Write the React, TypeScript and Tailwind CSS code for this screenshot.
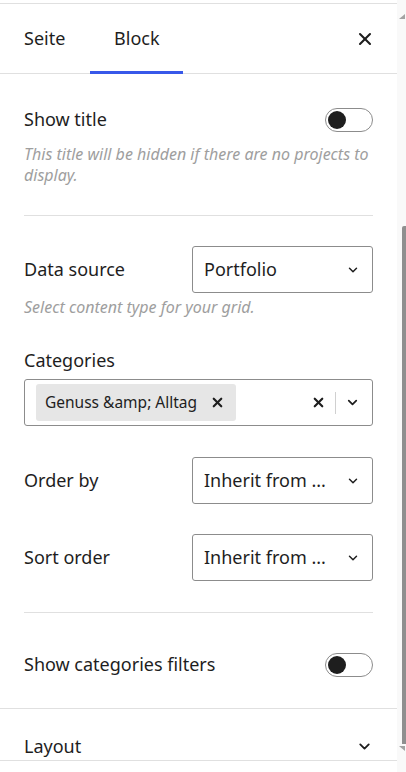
import { ChevronDown, X } from "lucide-react";

function Toggle() {
  return (
    <span className="flex h-6 w-12 shrink-0 items-center rounded-full border border-[#8c8c8c] bg-white px-[2px]">
      <span className="h-[18px] w-[18px] rounded-full bg-[#1e1e1e]" />
    </span>
  );
}

function Select({ value }: { value: string }) {
  return (
    <div className="flex h-[47px] w-[181px] items-center justify-between rounded-[3px] border border-[#8c8c8c] pl-[11px] pr-[12px]">
      <span className="text-[18px] text-[#1e1e1e]">{value}</span>
      <ChevronDown size={14} strokeWidth={2.5} className="text-[#1e1e1e]" />
    </div>
  );
}

function Row({ label, value }: { label: string; value: string }) {
  return (
    <div className="flex items-center justify-between">
      <span className="text-[18px] text-[#1e1e1e]">{label}</span>
      <Select value={value} />
    </div>
  );
}

export default function App() {
  return (
    <div
      className="flex h-[772px] w-[406px] overflow-hidden bg-white"
      style={{ fontFamily: '"Noto Sans", "Open Sans", sans-serif' }}
    >
      <div className="flex w-[397px] flex-col">
        <div className="mt-[3px] border-t border-[#e0e0e0]" />

        {/* tabs */}
        <div className="flex h-[70px] items-stretch border-b border-[#e0e0e0]">
          <div className="flex items-center pl-6 pr-[25px] text-[18px] text-[#1e1e1e]">Seite</div>
          <div className="relative flex w-[93px] items-center justify-center text-[18px] text-[#1e1e1e]">
            Block
            <span className="absolute bottom-[-1px] left-0 right-0 h-[3px] bg-[#3858e9]" />
          </div>
          <div className="flex-1" />
          <div className="flex w-[64px] items-center justify-center">
            <X size={20} strokeWidth={2.5} className="text-[#1e1e1e]" />
          </div>
        </div>

        <div className="px-6">
          {/* show title */}
          <div className="mt-[32px] flex items-center justify-between">
            <span className="text-[18px] text-[#1e1e1e]">Show title</span>
            <Toggle />
          </div>
          <p className="mt-[11px] text-[16px] italic leading-[21px] text-[#9e9e9e]">
            This title will be hidden if there are no projects to display.
          </p>
          <div className="mt-[29px] border-t border-[#e0e0e0]" />

          {/* data source */}
          <div className="mt-[30px]">
            <Row label="Data source" value="Portfolio" />
          </div>
          <p className="mt-[4px] text-[16px] italic leading-[21px] text-[#9e9e9e]">
            Select content type for your grid.
          </p>

          {/* categories */}
          <div className="mt-[30px] text-[18px] leading-[24px] text-[#1e1e1e]">Categories</div>
          <div className="mt-[7px] flex h-[47px] items-center rounded-[3px] border border-[#8c8c8c] pl-[11px] pr-[12px]">
            <div className="flex h-[37px] w-[200px] items-center justify-between rounded-[3px] bg-[#e6e6e6] pl-[9px] pr-[11px]">
              <span className="text-[15.5px] text-[#1e1e1e]">Genuss &amp;amp; Alltag</span>
              <X size={15} strokeWidth={3.5} className="text-[#1e1e1e]" />
            </div>
            <div className="flex-1" />
            <X size={15} strokeWidth={3.5} className="text-[#1e1e1e]" />
            <span className="mx-[9px] h-[22px] w-px bg-[#d0d0d0]" />
            <ChevronDown size={15} strokeWidth={2.8} className="text-[#1e1e1e]" />
          </div>

          <div className="mt-[31px]">
            <Row label="Order by" value="Inherit from ..." />
          </div>
          <div className="mt-[30px]">
            <Row label="Sort order" value="Inherit from ..." />
          </div>

          <div className="mt-[31px] border-t border-[#e0e0e0]" />

          <div className="mt-[38px] flex items-center justify-between">
            <span className="text-[18px] text-[#1e1e1e]">Show categories filters</span>
            <Toggle />
          </div>
        </div>

        <div className="mt-[30px] border-t border-[#e0e0e0]" />
        <div className="flex items-center justify-between px-6 pt-[24px]">
          <span className="text-[18px] text-[#1e1e1e]">Layout</span>
          <ChevronDown size={17} strokeWidth={2.6} className="text-[#1e1e1e]" />
        </div>
        <div className="border-t border-[#e0e0e0]" />
      </div>

      {/* scrollbar */}
      <div className="flex w-[9px] flex-col items-end bg-[#f9f9f9]">
        <svg width="6" height="5" className="mt-[14px] mr-[1px]" viewBox="0 0 6 5">
          <polygon points="0,5 6,5 6,0" fill="#a3a3a3" />
        </svg>
        <div className="mt-[207px] h-[518px] w-[4px] rounded-tl-[2px] bg-[#8f8f8f]" />
        <svg width="6" height="5" className="mt-[2px] mr-[1px]" viewBox="0 0 6 5">
          <polygon points="0,0 6,0 6,5" fill="#a3a3a3" />
        </svg>
      </div>
    </div>
  );
}
